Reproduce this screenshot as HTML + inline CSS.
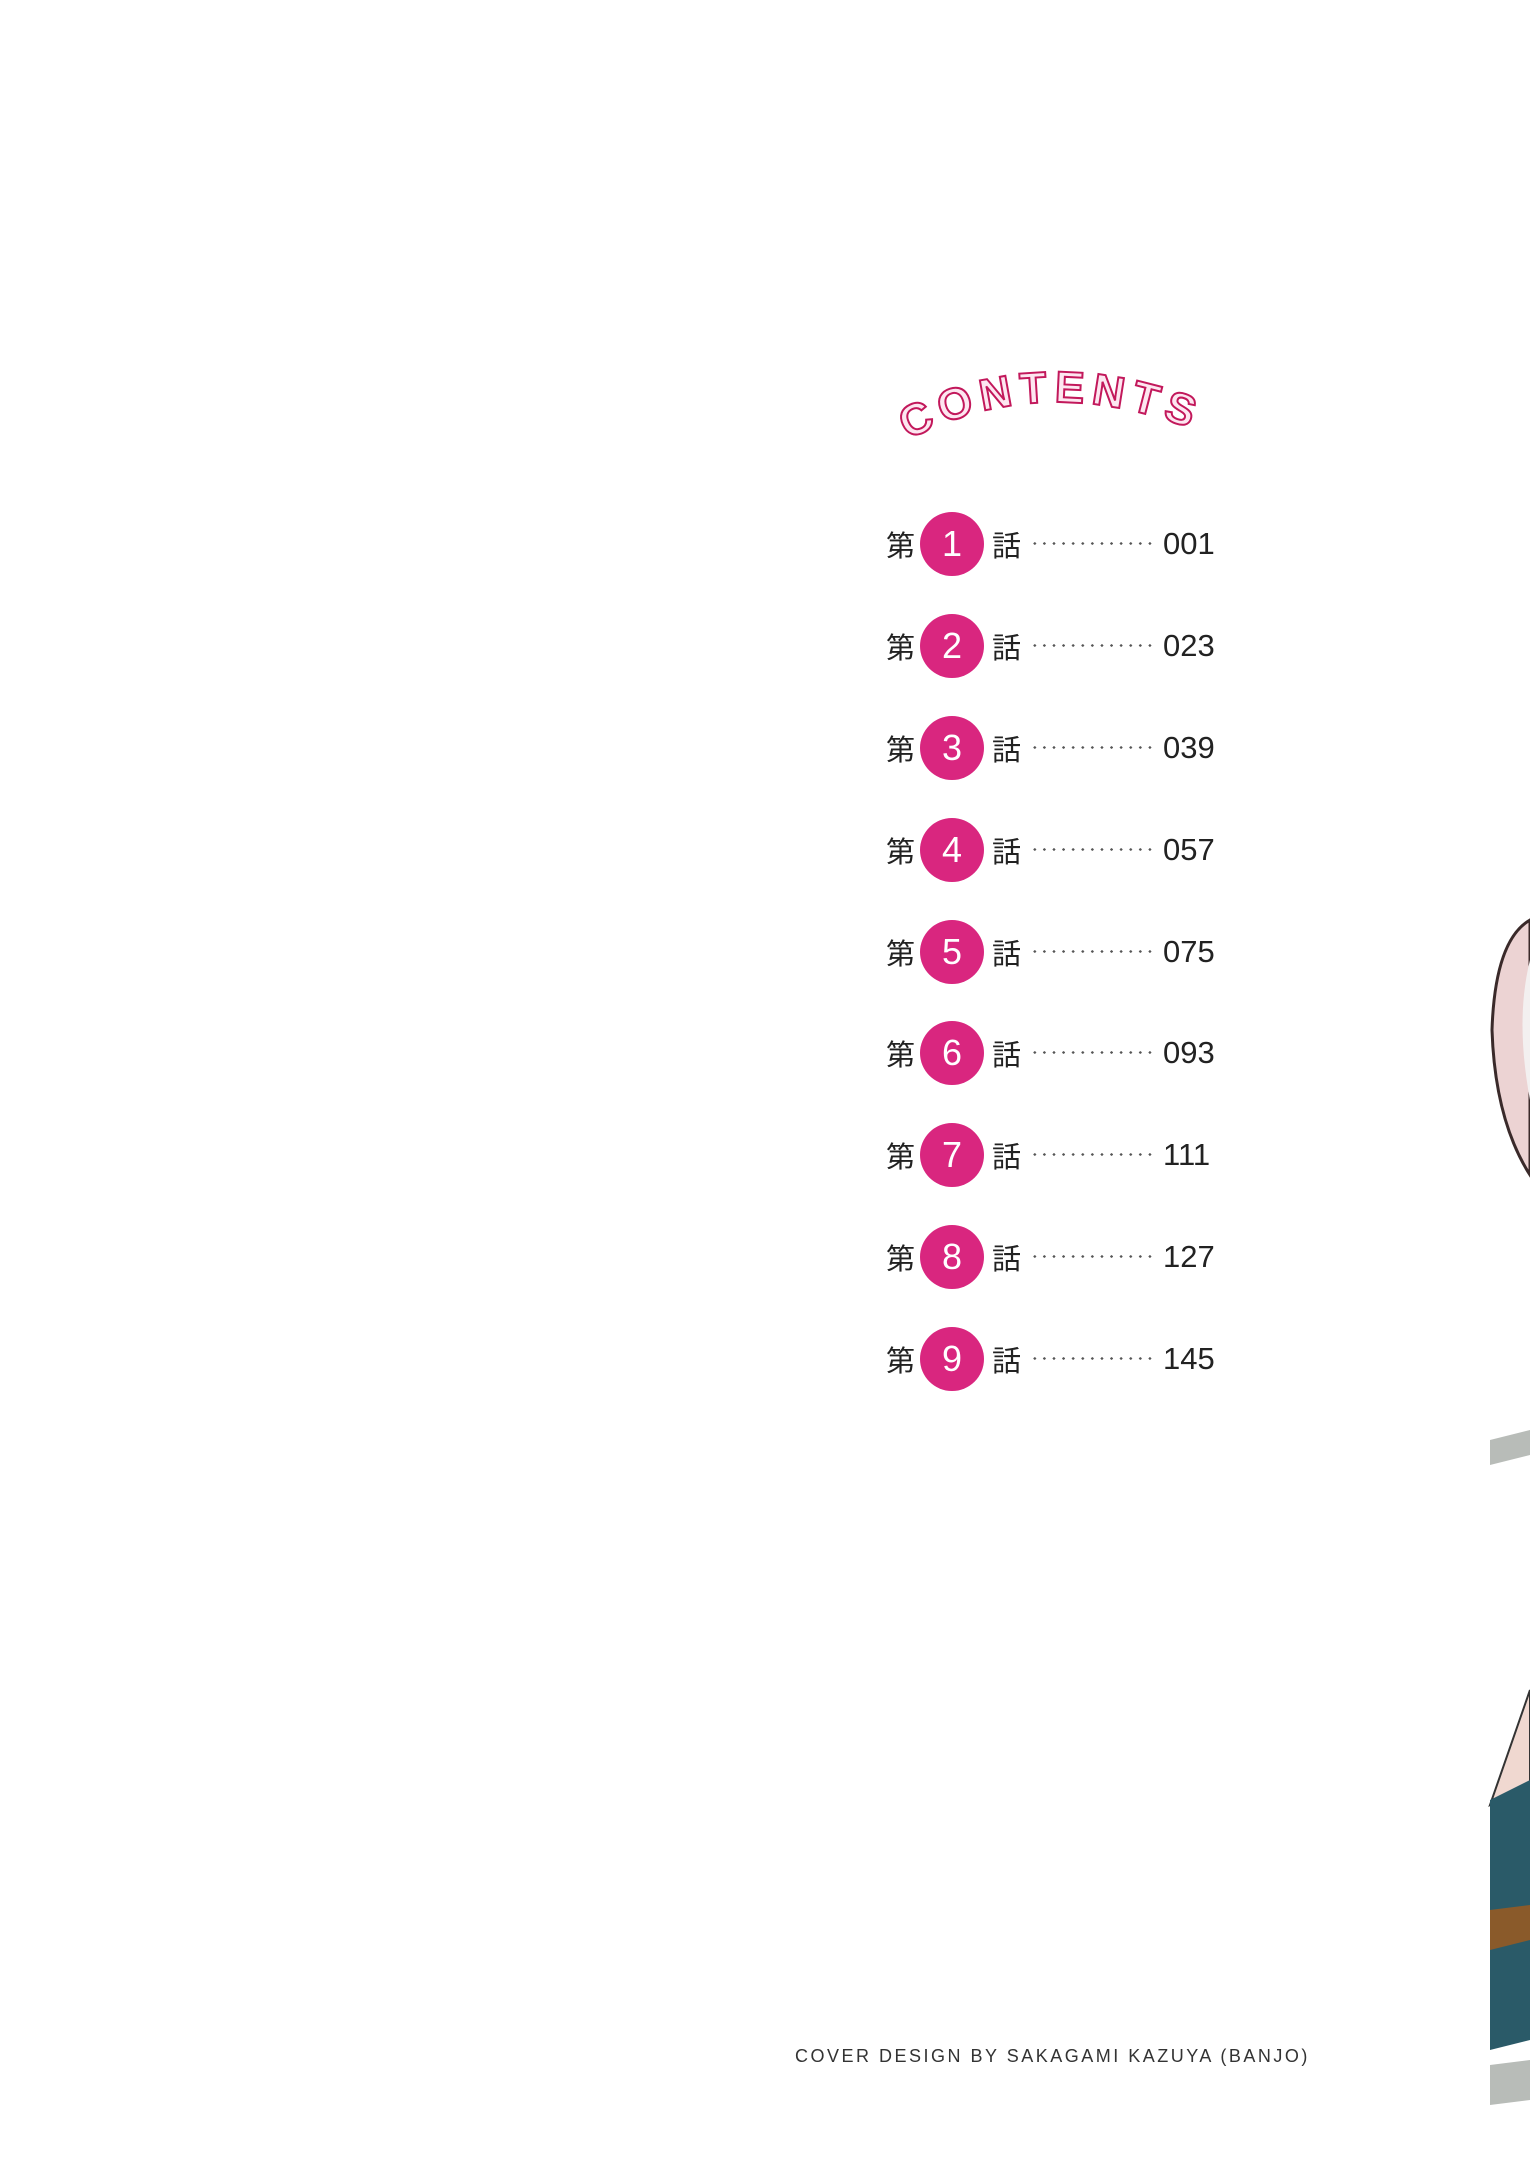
<!DOCTYPE html>
<html><head><meta charset="utf-8"><style>
body{margin:0;width:1530px;height:2160px;background:#fff;position:relative;overflow:hidden;font-family:"Liberation Sans","Noto Sans CJK JP",sans-serif}
.row{position:absolute;left:880px;height:64px;width:360px}
.k{position:absolute;top:14px;font-size:29px;color:#222;font-family:"Noto Sans CJK JP",sans-serif;line-height:36px}
.c{position:absolute;left:40px;top:0;width:64px;height:64px;border-radius:50%;background:#d9267f;color:#fff;font-size:36px;line-height:64px;text-align:center}
.d{position:absolute;left:150px;top:30px;width:124px;height:3px;background:radial-gradient(circle,#555 1.2px,transparent 1.4px) 0 0/9.6px 3px repeat-x}
.n{position:absolute;left:283px;top:14px;font-size:31px;color:#222;line-height:36px}
</style></head><body>
<svg style="position:absolute;left:890px;top:355px" width="320" height="105">
<path id="arc" d="M18 85 Q150 15 305 75" fill="none"/>
<text font-family="Liberation Sans" font-weight="bold" font-size="44" fill="#fde6f0" stroke="#c2185b" stroke-width="2" letter-spacing="7"><textPath href="#arc">CONTENTS</textPath></text>
</svg>
<div class="row" style="top:512px"><span class="k" style="left:6px">第</span><div class="c">1</div><span class="k" style="left:112px">話</span><div class="d"></div><span class="n">001</span></div>
<div class="row" style="top:614px"><span class="k" style="left:6px">第</span><div class="c">2</div><span class="k" style="left:112px">話</span><div class="d"></div><span class="n">023</span></div>
<div class="row" style="top:716px"><span class="k" style="left:6px">第</span><div class="c">3</div><span class="k" style="left:112px">話</span><div class="d"></div><span class="n">039</span></div>
<div class="row" style="top:818px"><span class="k" style="left:6px">第</span><div class="c">4</div><span class="k" style="left:112px">話</span><div class="d"></div><span class="n">057</span></div>
<div class="row" style="top:920px"><span class="k" style="left:6px">第</span><div class="c">5</div><span class="k" style="left:112px">話</span><div class="d"></div><span class="n">075</span></div>
<div class="row" style="top:1021px"><span class="k" style="left:6px">第</span><div class="c">6</div><span class="k" style="left:112px">話</span><div class="d"></div><span class="n">093</span></div>
<div class="row" style="top:1123px"><span class="k" style="left:6px">第</span><div class="c">7</div><span class="k" style="left:112px">話</span><div class="d"></div><span class="n">111</span></div>
<div class="row" style="top:1225px"><span class="k" style="left:6px">第</span><div class="c">8</div><span class="k" style="left:112px">話</span><div class="d"></div><span class="n">127</span></div>
<div class="row" style="top:1327px"><span class="k" style="left:6px">第</span><div class="c">9</div><span class="k" style="left:112px">話</span><div class="d"></div><span class="n">145</span></div>
<div style="position:absolute;left:795px;top:2046px;font-size:18px;letter-spacing:2.5px;color:#333">COVER DESIGN BY SAKAGAMI KAZUYA (BANJO)</div>
<svg style="position:absolute;left:1480px;top:900px" width="50" height="1260">
<path d="M50 20 Q15 40 12 130 Q15 220 50 275 Z" fill="#ecd3d3" stroke="#3a2a2a" stroke-width="3"/>
<path d="M50 60 Q35 120 50 200 Z" fill="#f3f0f0"/>
<path d="M10 540 L50 530 L50 555 L10 565 Z" fill="#b8bcb8"/>
<path d="M50 790 L10 905 L50 885 Z" fill="#f0d8d0" stroke="#333" stroke-width="2"/>
<path d="M10 900 L50 880 L50 1140 L10 1150 Z" fill="#2a5a68"/>
<path d="M10 1010 L50 1005 L50 1040 L10 1050 Z" fill="#8a5a2a"/>
<path d="M10 1165 L50 1160 L50 1200 L10 1205 Z" fill="#b8bcb8"/>
</svg>
</body></html>
